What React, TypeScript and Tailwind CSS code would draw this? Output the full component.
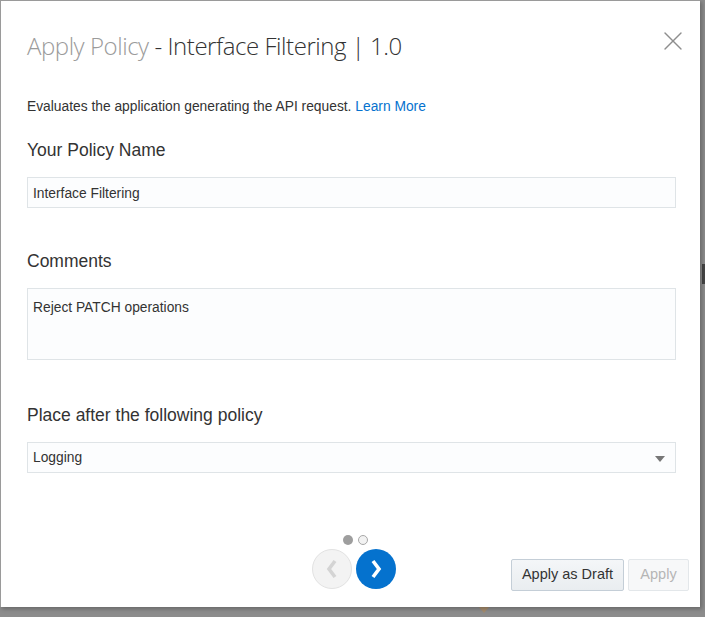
import { X } from "lucide-react";

const font = { fontFamily: '"Liberation Sans", Arial, sans-serif' };

function Field({ label, children, className = "" }: { label: string; children: React.ReactNode; className?: string }) {
  return (
    <div className={className}>
      <div className="text-[17.5px] leading-[20px] text-[#333]">{label}</div>
      {children}
    </div>
  );
}

export default function App() {
  return (
    <div className="w-[705px] h-[617px] bg-[#8c8c8c] relative overflow-hidden" style={font}>
      {/* backdrop bits */}
      <div className="absolute right-0 top-[264px] w-[3px] h-[20px] bg-[#444]" />
      <div className="absolute left-[478px] top-[606px] w-0 h-0 border-l-[6px] border-r-[6px] border-t-[7px] border-l-transparent border-r-transparent border-t-[#a58c6e]" />

      {/* Dialog */}
      <div className="w-[700px] h-[607px] bg-white border-t border-l border-[#9a9a9a] shadow-[2px_2px_4px_rgba(0,0,0,0.25)] flex flex-col relative">
        <div className="flex items-start justify-between pl-[26px] pr-[11px] pt-[30px]">
          <h1 className="text-[24px] leading-[30px] font-light tracking-[-0.45px]" style={{ fontFamily: '"Open Sans", "Liberation Sans", sans-serif' }}>
            <span className="text-[#9b9b9b]">Apply Policy</span>
            <span className="text-[#333]"> - Interface Filtering | 1.0</span>
          </h1>
          <button className="-mt-[6px] text-[#8e8e8e]">
            <X size={32} strokeWidth={1} />
          </button>
        </div>

        <div className="px-[26px] flex flex-col">
          <p className="mt-[38px] text-[13.8px] leading-[16px] text-[#333]">
            Evaluates the application generating the API request.{" "}
            <a className="text-[#0572ce]">Learn More</a>
          </p>

          <Field label="Your Policy Name" className="mt-[25px]">
            <div className="mt-[17px] h-[31px] w-[649px] bg-[#fcfdfe] border border-[#dfe4e7] flex items-center px-[5px] pt-[3px] text-[13.8px] text-[#333]">
              Interface Filtering
            </div>
          </Field>

          <Field label="Comments" className="mt-[43px]">
            <div className="mt-[17px] h-[72px] w-[649px] bg-[#fcfdfe] border border-[#dfe4e7] px-[5px] pt-[11px] text-[13.8px] leading-[16px] text-[#333]">
              Reject PATCH operations
            </div>
          </Field>

          <Field label="Place after the following policy" className="mt-[45px]">
            <div className="mt-[17px] h-[31px] w-[649px] bg-[#fcfdfe] border border-[#dfe4e7] flex items-center justify-between px-[5px] pr-[10px] pt-[2px] text-[13.8px] text-[#333]">
              <span>Logging</span>
              <span className="w-0 h-0 border-l-[5px] border-r-[5px] border-t-[6px] border-l-transparent border-r-transparent border-t-[#777]" />
            </div>
          </Field>
        </div>

        {/* Footer */}
        <div className="absolute left-0 right-0 bottom-0 h-[75px]">
          <div className="absolute left-[342px] top-[3px] flex gap-[5px]">
            <span className="w-[10px] h-[10px] rounded-full bg-[#9e9e9e]" />
            <span className="w-[10px] h-[10px] rounded-full bg-[#f2f2f2] border border-[#a8a8a8]" />
          </div>
          <div className="absolute left-[311px] top-[17px] flex gap-[4px]">
            <button className="w-[40px] h-[40px] rounded-full bg-[#f3f3f3] border border-[#e2e2e2] flex items-center justify-center">
              <svg width="16" height="22" viewBox="0 0 16 22">
                <path d="M11 3 L5 11 L11 19" fill="none" stroke="#d4d4d4" strokeWidth="3.6" />
              </svg>
            </button>
            <button className="w-[40px] h-[40px] rounded-full bg-[#0572ce] flex items-center justify-center">
              <svg width="16" height="22" viewBox="0 0 16 22">
                <path d="M5 3 L11 11 L5 19" fill="none" stroke="#fff" strokeWidth="3.6" />
              </svg>
            </button>
          </div>
          <div className="absolute left-[510px] top-[27px] flex gap-[4px]">
            <button className="h-[32px] w-[113px] bg-gradient-to-b from-[#f4f6f8] to-[#e9edf0] border border-[#c4ced7] rounded-[2px] text-[14.5px] text-[#333]">
              Apply as Draft
            </button>
            <button className="h-[32px] w-[61px] bg-[#f7f8f9] border border-[#e3e7ea] rounded-[2px] text-[14.5px] text-[#b5b5b5]">
              Apply
            </button>
          </div>
        </div>
      </div>
    </div>
  );
}
